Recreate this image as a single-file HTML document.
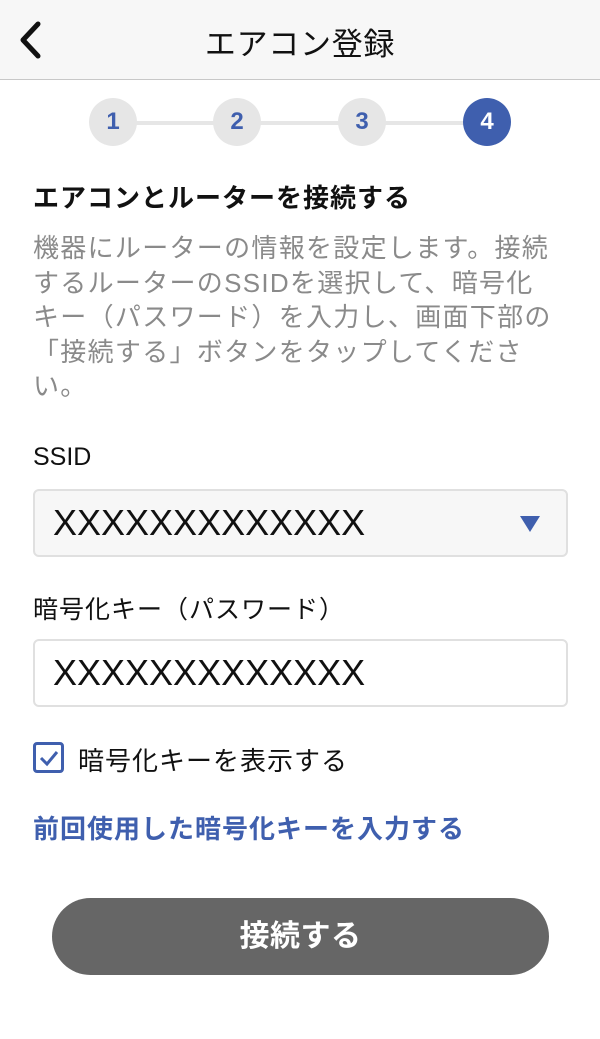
<!DOCTYPE html><html><head><meta charset="utf-8"><style>
*{margin:0;padding:0;box-sizing:border-box}
body{width:600px;height:1039px;background:#fff;font-family:"Liberation Sans","Noto Sans CJK JP",sans-serif;color:#111;position:relative;overflow:hidden}
.a{position:absolute;white-space:nowrap}
.hd{position:absolute;left:0;top:0;width:600px;height:80px;background:#f7f7f7;border-bottom:1px solid #c8c8c8}
.c{position:absolute;width:48px;height:48px;border-radius:50%;background:#e6e6e6;color:#3f5fae;font-weight:bold;font-size:24px;text-align:center;line-height:48px;top:98px}
.box{position:absolute;left:33px;width:535px;height:68px;border:2px solid #e0e0e0;border-radius:6px}
.x{position:absolute;left:18px;top:11px;font-size:36px;color:#111}
</style></head><body>
<div class="hd"></div>
<svg class="a" style="left:14px;top:20px" width="30" height="40"><path d="M24 4 L9 20 L24 36" stroke="#111" stroke-width="5" fill="none" stroke-linecap="round" stroke-linejoin="round"/></svg>
<div class="a" style="left:0;width:600px;text-align:center;top:19px;font-size:31px;letter-spacing:0.7px">エアコン登録</div>
<div class="a" style="left:113px;top:121px;width:374px;height:4px;background:#e6e6e6"></div>
<div class="c" style="left:89px">1</div><div class="c" style="left:213px">2</div><div class="c" style="left:338px">3</div><div class="c" style="left:463px;background:#3f5fae;color:#fff">4</div>
<div class="a" style="left:33px;top:178px;font-size:26px;font-weight:bold;letter-spacing:1px">エアコンとルーターを接続する</div>
<div class="a" style="left:33px;top:231px;font-size:26px;line-height:34.5px;color:#8a8a8a;letter-spacing:1.3px">機器にルーターの情報を設定します。接続<br>するルーターのSSIDを選択して、暗号化<br>キー（パスワード）を入力し、画面下部の<br>「接続する」ボタンをタップしてくださ<br>い。</div>
<div class="a" style="left:33px;top:443px;font-size:25px">SSID</div>
<div class="box" style="top:489px;background:#f7f7f7"><div class="x">XXXXXXXXXXXXX</div>
<svg class="a" style="left:484px;top:24px" width="22" height="18"><path d="M1 1 L21 1 L11 17 Z" fill="#3f5fae"/></svg></div>
<div class="a" style="left:33px;top:590px;font-size:25px;letter-spacing:1px">暗号化キー（パスワード）</div>
<div class="box" style="top:639px;background:#fff"><div class="x">XXXXXXXXXXXXX</div></div>
<div class="a" style="left:33px;top:742px;width:31px;height:31px;border:3px solid #3f5fae;border-radius:4px"></div>
<svg class="a" style="left:38px;top:748px" width="22" height="20"><path d="M3 10 L9 16 L19 4" stroke="#3f5fae" stroke-width="3" fill="none"/></svg>
<div class="a" style="left:78px;top:741px;font-size:26px;letter-spacing:1px">暗号化キーを表示する</div>
<div class="a" style="left:33px;top:809px;font-size:26px;font-weight:bold;color:#3f5fae;letter-spacing:1px">前回使用した暗号化キーを入力する</div>
<div class="a" style="left:52px;top:898px;width:497px;height:77px;border-radius:39px;background:#666;color:#fff;font-weight:bold;font-size:30px;text-align:center;line-height:77px;letter-spacing:0.5px">接続する</div>
</body></html>
